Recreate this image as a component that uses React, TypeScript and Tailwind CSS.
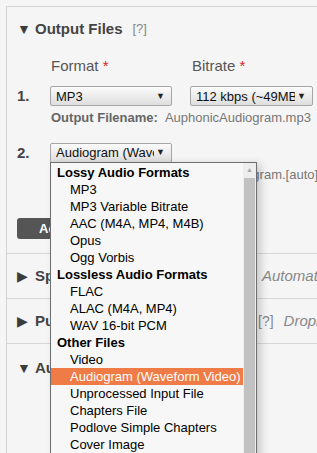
import React from "react"

const groups: { label: string; items: string[] }[] = [
  {
    label: "Lossy Audio Formats",
    items: ["MP3", "MP3 Variable Bitrate", "AAC (M4A, MP4, M4B)", "Opus", "Ogg Vorbis"],
  },
  {
    label: "Lossless Audio Formats",
    items: ["FLAC", "ALAC (M4A, MP4)", "WAV 16-bit PCM"],
  },
  {
    label: "Other Files",
    items: [
      "Video",
      "Audiogram (Waveform Video)",
      "Unprocessed Input File",
      "Chapters File",
      "Podlove Simple Chapters",
      "Cover Image",
      "Transcript",
    ],
  },
]

function Select({ value, width }: { value: string; width: string }) {
  return (
    <div
      className={`${width} flex h-[20px] items-center justify-between overflow-hidden rounded-[2px] border border-[#a6a6a6] bg-gradient-to-b from-[#fbfbfb] to-[#dedede] pl-[5px] pr-[6px] text-[13px] text-[#111]`}
    >
      <span className="overflow-hidden whitespace-nowrap">{value}</span>
      <span className="pl-[2px] text-[9px] text-[#222]">▼</span>
    </div>
  )
}

function Heading({ open, title, width }: { open?: boolean; title: string; width?: string }) {
  return (
    <div className={`flex h-[20px] shrink-0 items-center overflow-hidden whitespace-nowrap pl-[10px] ${width ?? ""}`}>
      <span className="w-[18px] text-[14px] leading-none text-[#3c3c3c]">{open ? "▼" : "▶"}</span>
      <span className="text-[15px] font-bold text-[#444]">{title}</span>
    </div>
  )
}

export default function App() {
  return (
    <div className="relative h-[453px] w-[317px] overflow-hidden bg-[#f5f5f5] font-['Liberation_Sans',Arial,sans-serif]">
      <div className="mt-[6px] ml-[6px] h-[460px] w-[400px] border-l border-t border-[#d2d2d2]">
        {/* Output Files */}
        <div className="h-[247px] border-b border-[#d8d8d8] pt-[12px]">
          <div className="flex items-center">
            <Heading open title="Output Files" />
            <span className="ml-[10px] text-[13px] text-[#888]">[?]</span>
          </div>

          <div className="mt-[18px] flex h-[18px] items-center text-[15px] text-[#555]">
            <span className="ml-[44px] w-[141px]">
              Format <span className="text-[#e02020]">*</span>
            </span>
            <span>
              Bitrate <span className="text-[#e02020]">*</span>
            </span>
          </div>

          <div className="mt-[10px] flex items-center">
            <span className="w-[43px] pl-[10px] text-[15px] font-bold text-[#444]">1.</span>
            <Select value="MP3" width="w-[122px]" />
            <div className="ml-[18px]">
              <Select value="112 kbps (~49MB)" width="w-[123px]" />
            </div>
          </div>
          <div className="mt-[2px] flex h-[16px] items-center whitespace-nowrap pl-[44px] text-[13px]">
            <span className="font-bold text-[#666]">Output Filename:</span>
            <span className="ml-[7px] text-[#777]">AuphonicAudiogram.mp3</span>
          </div>

          <div className="mt-[16px] flex items-center">
            <span className="w-[43px] pl-[10px] text-[15px] font-bold text-[#444]">2.</span>
            <Select value="Audiogram (Waveform Video)" width="w-[122px]" />
          </div>
          <div className="mt-[3px] flex h-[16px] items-center whitespace-nowrap pl-[44px] text-[13px]">
            <span className="font-bold text-[#666]">Output Filename:</span>
            <span className="ml-[7px] text-[#777]">AuphonicAudiogram.[auto]</span>
          </div>

          <div className="mt-[35px] ml-[10px] flex h-[21px] w-fit items-center whitespace-nowrap rounded-[3px] bg-[#555] px-[22px] text-[13px] font-bold text-white">
            Add Output File
          </div>
        </div>

        {/* Speech Recognition */}
        <div className="flex h-[45px] items-center border-b border-[#d8d8d8]">
          <Heading title="Speech Recognition" width="w-[255px]" />
          <span className="whitespace-nowrap text-[15px] italic text-[#888]">Automatic</span>
        </div>

        {/* Publishing */}
        <div className="flex h-[45px] items-center border-b border-[#d8d8d8] whitespace-nowrap">
          <Heading title="Publishing / External Services" width="w-[251px]" />
          <span className="text-[14px] text-[#888]">[?]</span>
          <span className="ml-[10px] text-[15px] italic text-[#888]">Dropbox</span>
        </div>

        {/* Audio Algorithms */}
        <div className="pt-[14px]">
          <Heading open title="Audio Algorithms" />
        </div>
      </div>

      {/* open select list */}
      <div className="absolute left-[50px] top-[162px] flex h-[300px] w-[207px] border border-[#6e6e6e] bg-[#f7f7f7] shadow-[4px_2px_8px_rgba(0,0,0,0.18)]">
        <div className="flex-1 pt-[1px] text-[13px] leading-[17px] text-[#000]">
          {groups.map((g) => (
            <div key={g.label}>
              <div className="h-[17px] whitespace-nowrap pl-[6px] font-bold">{g.label}</div>
              {g.items.map((it) => (
                <div
                  key={it}
                  className={`h-[17px] whitespace-nowrap pl-[19px] ${
                    it.startsWith("Audiogram") ? "bg-[#ef7b47] text-white" : ""
                  }`}
                >
                  {it}
                </div>
              ))}
            </div>
          ))}
        </div>
        <div className="flex w-[13px] flex-col bg-[#ededed]">
          <div className="flex h-[15px] items-center justify-center text-[7px] text-[#a8a8a8]">▲</div>
          <div className="mx-[1px] flex-1 bg-[#c1c1c1]" />
        </div>
      </div>
    </div>
  )
}
